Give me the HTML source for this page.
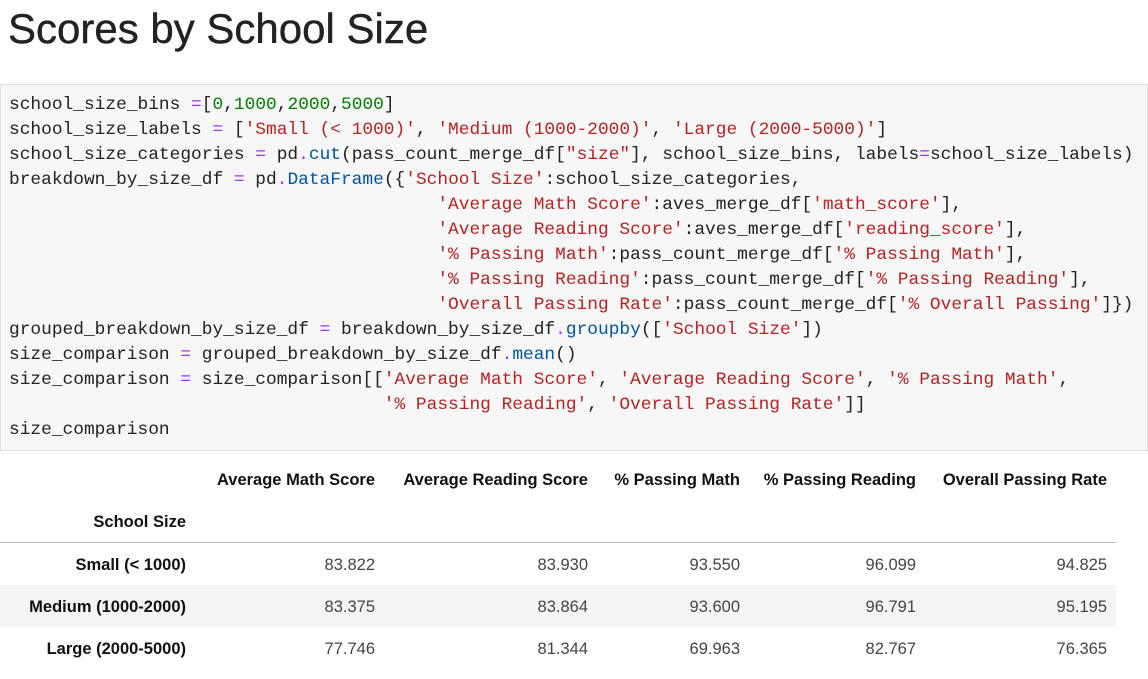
<!DOCTYPE html>
<html><head><meta charset="utf-8"><style>
body{margin:0;width:1148px;height:679px;background:#fff;position:relative;overflow:hidden;font-family:"Liberation Sans",sans-serif;color:#222}
h1{position:absolute;left:8px;top:5px;margin:0;font-size:42px;font-weight:normal;color:#222;-webkit-text-stroke:0.4px #222}
.code{position:absolute;left:0;top:84px;width:1146px;height:365px;background:#f7f7f7;border:1px solid #dfdfdf}
pre{position:absolute;left:8px;top:8px;margin:0;font-family:"Liberation Mono",monospace;font-size:17.85px;line-height:25px;color:#222}
.o{color:#a22fff}.n{color:#008000}.s{color:#ba2121}.f{color:#0055aa}
.c{position:absolute;font-size:16.5px;white-space:nowrap;text-align:right;line-height:20px}
.b{font-weight:bold;color:#111}
.v{color:#444}
</style></head><body>
<h1>Scores by School Size</h1>
<div class="code"><pre>school_size_bins <span class="o">=</span>[<span class="n">0</span>,<span class="n">1000</span>,<span class="n">2000</span>,<span class="n">5000</span>]
school_size_labels <span class="o">=</span> [<span class="s">'Small (&lt; 1000)'</span>, <span class="s">'Medium (1000-2000)'</span>, <span class="s">'Large (2000-5000)'</span>]
school_size_categories <span class="o">=</span> pd<span class="o">.</span><span class="f">cut</span>(pass_count_merge_df[<span class="s">"size"</span>], school_size_bins, labels<span class="o">=</span>school_size_labels)
breakdown_by_size_df <span class="o">=</span> pd<span class="o">.</span><span class="f">DataFrame</span>({<span class="s">'School Size'</span>:school_size_categories,
                                        <span class="s">'Average Math Score'</span>:aves_merge_df[<span class="s">'math_score'</span>],
                                        <span class="s">'Average Reading Score'</span>:aves_merge_df[<span class="s">'reading_score'</span>],
                                        <span class="s">'% Passing Math'</span>:pass_count_merge_df[<span class="s">'% Passing Math'</span>],
                                        <span class="s">'% Passing Reading'</span>:pass_count_merge_df[<span class="s">'% Passing Reading'</span>],
                                        <span class="s">'Overall Passing Rate'</span>:pass_count_merge_df[<span class="s">'% Overall Passing'</span>]})
grouped_breakdown_by_size_df <span class="o">=</span> breakdown_by_size_df<span class="o">.</span><span class="f">groupby</span>([<span class="s">'School Size'</span>])
size_comparison <span class="o">=</span> grouped_breakdown_by_size_df<span class="o">.</span><span class="f">mean</span>()
size_comparison <span class="o">=</span> size_comparison[[<span class="s">'Average Math Score'</span>, <span class="s">'Average Reading Score'</span>, <span class="s">'% Passing Math'</span>,
                                   <span class="s">'% Passing Reading'</span>, <span class="s">'Overall Passing Rate'</span>]]
size_comparison</pre></div>

<div style="position:absolute;left:0;top:542px;width:1116px;height:1px;background:#bdbdbd"></div>
<div style="position:absolute;left:0;top:585px;width:1116px;height:42px;background:#f5f5f5"></div>

<div class="c b" style="right:773px;top:470px">Average Math Score</div>
<div class="c b" style="right:560px;top:470px">Average Reading Score</div>
<div class="c b" style="right:408px;top:470px">% Passing Math</div>
<div class="c b" style="right:232px;top:470px">% Passing Reading</div>
<div class="c b" style="right:41px;top:470px">Overall Passing Rate</div>
<div class="c b" style="right:962px;top:512px">School Size</div>

<div class="c b" style="right:962px;top:555px">Small (&lt; 1000)</div>
<div class="c v" style="right:773px;top:555px">83.822</div>
<div class="c v" style="right:560px;top:555px">83.930</div>
<div class="c v" style="right:408px;top:555px">93.550</div>
<div class="c v" style="right:232px;top:555px">96.099</div>
<div class="c v" style="right:41px;top:555px">94.825</div>

<div class="c b" style="right:962px;top:597px">Medium (1000-2000)</div>
<div class="c v" style="right:773px;top:597px">83.375</div>
<div class="c v" style="right:560px;top:597px">83.864</div>
<div class="c v" style="right:408px;top:597px">93.600</div>
<div class="c v" style="right:232px;top:597px">96.791</div>
<div class="c v" style="right:41px;top:597px">95.195</div>

<div class="c b" style="right:962px;top:639px">Large (2000-5000)</div>
<div class="c v" style="right:773px;top:639px">77.746</div>
<div class="c v" style="right:560px;top:639px">81.344</div>
<div class="c v" style="right:408px;top:639px">69.963</div>
<div class="c v" style="right:232px;top:639px">82.767</div>
<div class="c v" style="right:41px;top:639px">76.365</div>
</body></html>
